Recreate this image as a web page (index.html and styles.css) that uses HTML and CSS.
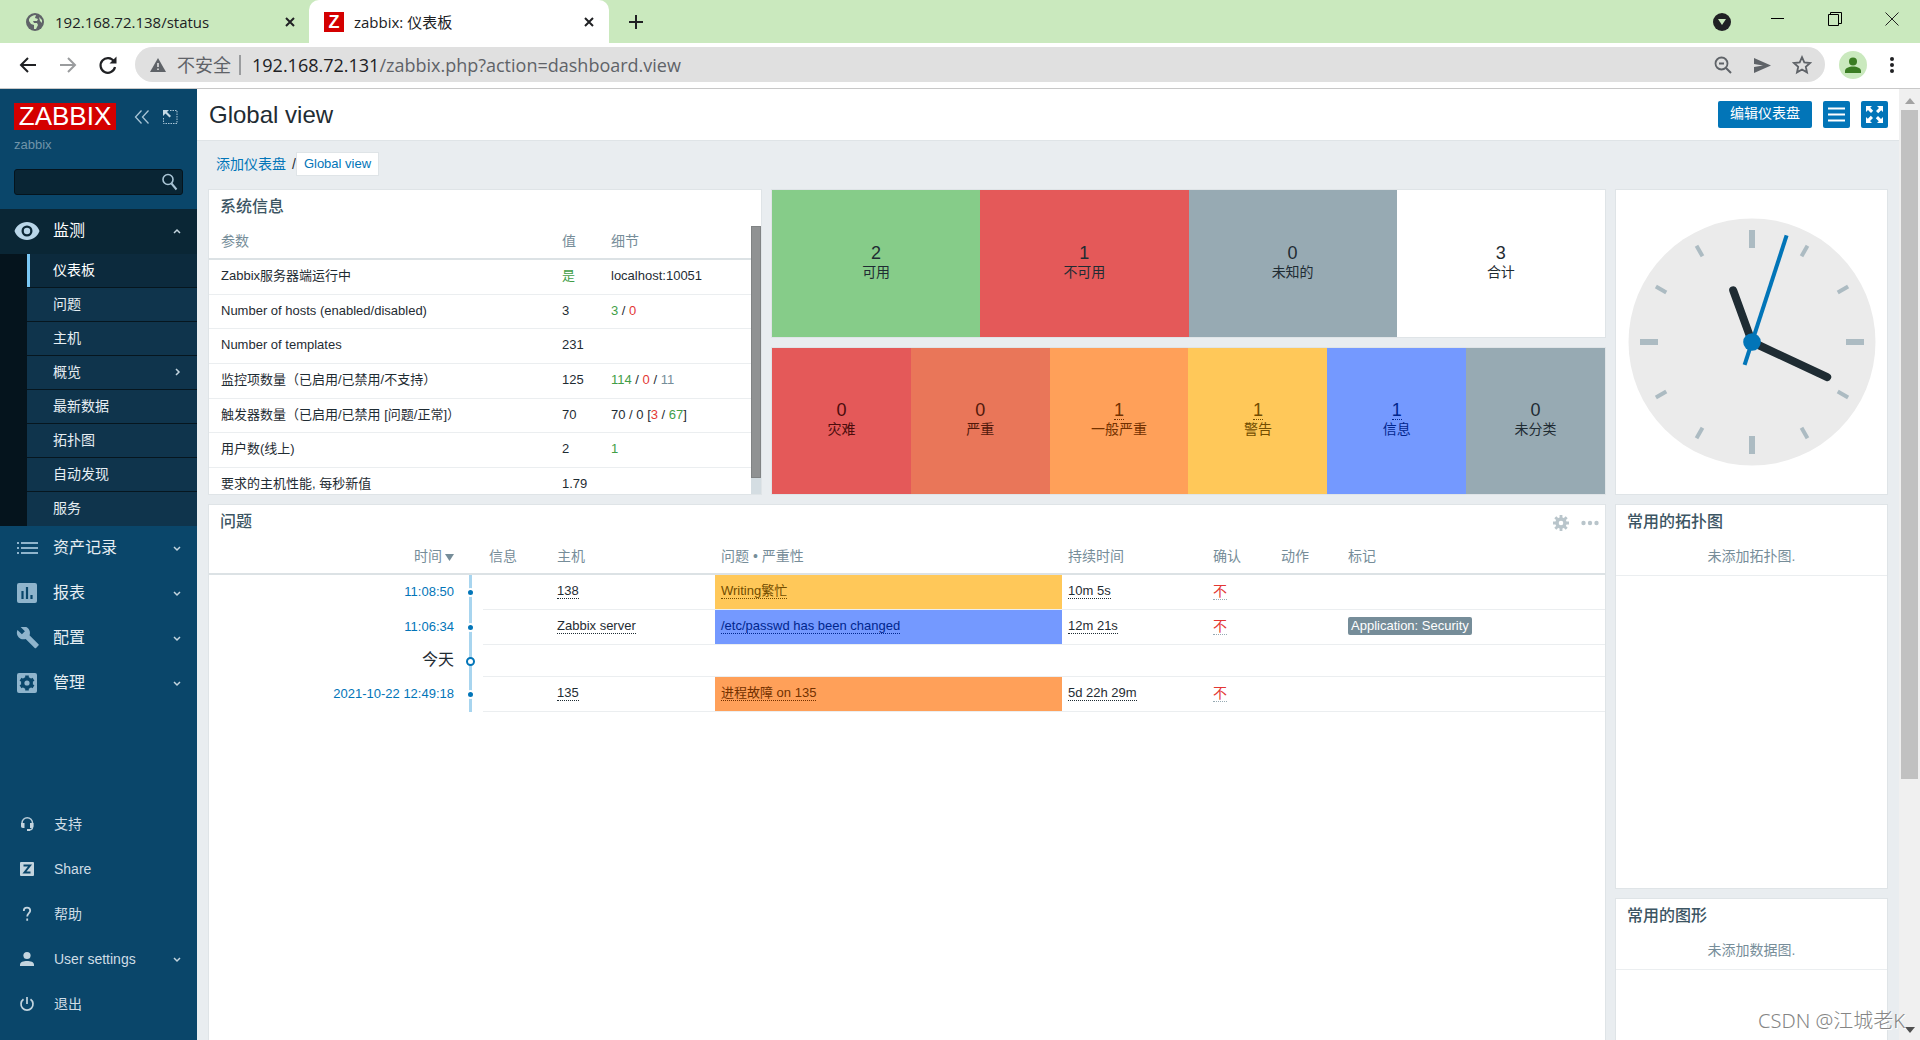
FILE: index.html
```html
<!DOCTYPE html>
<html lang="zh-CN">
<head>
<meta charset="utf-8">
<title>zabbix: 仪表板</title>
<link rel="stylesheet" href="styles.css">
</head>
<body>
<div class="tabstrip">
  <div class="tab">
    <svg width="20" height="20" viewBox="0 0 20 20"><circle cx="10" cy="10" r="9" fill="#5f6368"/><path d="M4 7c2-3 4-4 7-4l-1 3 3 1-1 2-4 0 1 2 3 0 1 2-2 4-2 0 0-4-3-1-2-3zM14 5l3 3 0 3-2-2z" fill="#cae9be"/></svg>
    <span class="tab-title">192.168.72.138/status</span>
    <button class="icon-btn" aria-label="关闭标签页"><svg width="10" height="10" viewBox="0 0 10 10"><path d="M1 1l8 8M9 1l-8 8" stroke="#202124" stroke-width="2"/></svg></button>
  </div>
  <div class="tab tab-active">
    <span class="favicon">Z</span>
    <span class="tab-title">zabbix: 仪表板</span>
    <button class="icon-btn" aria-label="关闭标签页"><svg width="10" height="10" viewBox="0 0 10 10"><path d="M1 1l8 8M9 1l-8 8" stroke="#202124" stroke-width="2"/></svg></button>
  </div>
  <button class="icon-btn new-tab" aria-label="新标签页"><svg width="16" height="16" viewBox="0 0 16 16"><path d="M8 1v14M1 8h14" stroke="#202124" stroke-width="2"/></svg></button>
  <div class="window-controls">
    <button class="icon-btn" aria-label="搜索标签页"><svg width="18" height="18" viewBox="0 0 18 18"><circle cx="9" cy="9" r="9" fill="#202124"/><path d="M5 6h8l-4 6z" fill="#cae9be"/></svg></button>
    <div class="window-buttons">
      <button class="icon-btn" aria-label="最小化"><svg width="14" height="14" viewBox="0 0 14 14"><path d="M0 6.500h13" stroke="#000"/></svg></button>
      <button class="icon-btn" aria-label="还原"><svg width="14" height="14" viewBox="0 0 14 14"><path d="M.5 2.500h10v11h-10zM2.500 2V.5h11v11H11" fill="none" stroke="#000"/></svg></button>
      <button class="icon-btn" aria-label="关闭"><svg width="14" height="14" viewBox="0 0 14 14"><path d="M.5.5l13 13M13.500.5l-13 13" stroke="#222"/></svg></button>
    </div>
  </div>
</div>
<div class="toolbar">
  <div class="nav-buttons">
    <button class="icon-btn" aria-label="后退"><svg width="20" height="20" viewBox="0 0 20 20"><path d="M18 10H3M10 3l-7 7 7 7" fill="none" stroke="#202124" stroke-width="2"/></svg></button>
    <button class="icon-btn" aria-label="前进"><svg width="20" height="20" viewBox="0 0 20 20"><path d="M2 10h15M10 3l7 7-7 7" fill="none" stroke="#9a9c9e" stroke-width="2"/></svg></button>
    <button class="icon-btn" aria-label="刷新"><svg width="20" height="20" viewBox="0 0 20 20"><path d="M16 6.500A7.300 7.300 0 1 0 17 12" fill="none" stroke="#202124" stroke-width="2.200"/><path d="M18.500 1.500v7h-7z" fill="#202124"/></svg></button>
  </div>
  <div class="omnibox">
    <svg width="16" height="14" viewBox="0 0 16 14"><path d="M8 0l8 14H0z" fill="#5f6368"/><path d="M8 5v4M8 10.500v1.500" stroke="#e0e0e0" stroke-width="1.600"/></svg>
    <span class="insecure">不安全</span>
    <span class="address"><b>192.168.72.131</b>/zabbix.php?action=dashboard.view</span>
    <div class="omni-actions">
      <button class="icon-btn" aria-label="缩放"><svg width="18" height="18" viewBox="0 0 18 18"><circle cx="7.500" cy="7.500" r="6" fill="none" stroke="#5f6368" stroke-width="1.800"/><path d="M5 7.500h5M12 12l5 5" stroke="#5f6368" stroke-width="2"/></svg></button>
      <button class="icon-btn" aria-label="发送"><svg width="18" height="18" viewBox="0 0 18 18"><path d="M1 2l17 7.500L1 17v-6l9-1.500L1 8z" fill="#5f6368"/></svg></button>
      <button class="icon-btn" aria-label="收藏"><svg width="20" height="20" viewBox="0 0 20 20"><path d="M10 2.200l2.300 5.200 5.700.6-4.200 3.800 1.200 5.600-5-2.900-5 2.900 1.200-5.600L2 8l5.700-.6z" fill="none" stroke="#5f6368" stroke-width="1.800"/></svg></button>
    </div>
  </div>
  <div class="profile-buttons">
    <button class="icon-btn" aria-label="用户"><svg width="28" height="28" viewBox="0 0 28 28"><circle cx="14" cy="14" r="14" fill="#cae9be"/><circle cx="14" cy="10.500" r="4" fill="#3b7d23"/><path d="M6 22v-2c0-3 4-4.500 8-4.500s8 1.500 8 4.500v2z" fill="#3b7d23"/></svg></button>
    <button class="icon-btn" aria-label="菜单"><svg width="6" height="18" viewBox="0 0 6 18"><g fill="#202124"><circle cx="3" cy="3" r="2"/><circle cx="3" cy="9" r="2"/><circle cx="3" cy="15" r="2"/></g></svg></button>
  </div>
</div>

<div class="app">
  <aside class="sidebar">
    <div class="brand">
      <a class="logo" href="#">ZABBIX</a>
      <button class="icon-btn" aria-label="折叠"><svg width="16" height="14" viewBox="0 0 16 14"><path d="M7.500.5L1.500 7l6 6.500M14.500.5L8.500 7l6 6.500" fill="none" stroke="#a9c5d6" stroke-width="1.300"/></svg></button>
      <button class="icon-btn" aria-label="隐藏"><svg width="16" height="16" viewBox="0 0 16 16"><path d="M8 1.500h7v13H1.500V8" fill="none" stroke="#a9c5d6" stroke-dasharray="1.500 1"/><path d="M1 1h6L5 3l4 4-1.500 1.500-4-4L1 7z" fill="#c5dae6"/></svg></button>
    </div>
    <div class="server-name">zabbix</div>
    <form class="search"><input type="search" aria-label="搜索"><button class="icon-btn" type="button" aria-label="搜索"><svg width="16" height="18" viewBox="0 0 16 18"><circle cx="6" cy="6.500" r="5" fill="none" stroke="#a9c5d6" stroke-width="1.600"/><path d="M9.500 10.500l5 6" stroke="#a9c5d6" stroke-width="2"/></svg></button></form>
    <nav>
      <ul class="menu">
        <li><a class="open" href="#"><svg width="26" height="18" viewBox="0 0 26 18"><path d="M13 0C7 0 2.500 3.500.5 9c2 5.500 6.500 9 12.500 9s10.500-3.500 12.500-9C23.500 3.500 19 0 13 0zm0 14.500a5.500 5.500 0 1 1 0-11 5.500 5.500 0 0 1 0 11z" fill="#b9d6e9"/><circle cx="13" cy="9" r="3.200" fill="#b9d6e9"/></svg><span>监测</span><svg class="chev" width="8" height="8" viewBox="0 0 8 8"><path d="M1 6l3-3 3 3"/></svg></a>
          <ul class="submenu">
            <li><a class="current" href="#">仪表板</a></li>
            <li><a href="#">问题</a></li>
            <li><a href="#">主机</a></li>
            <li><a href="#"><span>概览</span><svg class="chev" width="8" height="8" viewBox="0 0 8 8"><path d="M3 1l3 3-3 3"/></svg></a></li>
            <li><a href="#">最新数据</a></li>
            <li><a href="#">拓扑图</a></li>
            <li><a href="#">自动发现</a></li>
            <li><a href="#">服务</a></li>
          </ul>
        </li>
        <li><a href="#"><svg width="26" height="20" viewBox="0 0 26 20"><path d="M3 5h2M7 5h17M3 10h2M7 10h17M3 15h2M7 15h17" stroke="#8fb4cc" stroke-width="2"/></svg><span>资产记录</span><svg class="chev" width="8" height="8" viewBox="0 0 8 8"><path d="M1 3l3 3 3-3"/></svg></a></li>
        <li><a href="#"><svg width="26" height="22" viewBox="0 0 26 22"><rect x="3" y="1" width="20" height="20" rx="2" fill="#8fb4cc"/><path d="M8.500 17V9M13 17V5M17.500 17v-4" stroke="#0a466a" stroke-width="2.200"/></svg><span>报表</span><svg class="chev" width="8" height="8" viewBox="0 0 8 8"><path d="M1 3l3 3 3-3"/></svg></a></li>
        <li><a href="#"><svg width="26" height="22" viewBox="0 0 26 22"><path d="M23 18.200l-9-9c.9-2.300.4-5-1.500-6.900-2-2-5-2.400-7.400-1.300l4.300 4.300-3 3L2 4C.8 6.400 1.300 9.400 3.300 11.400c1.900 1.900 4.600 2.400 6.900 1.500l9 9c.4.4 1 .4 1.400 0l2.300-2.300c.5-.4.500-1.100.1-1.400z" transform="translate(1.500 -1)" fill="#8fb4cc"/></svg><span>配置</span><svg class="chev" width="8" height="8" viewBox="0 0 8 8"><path d="M1 3l3 3 3-3"/></svg></a></li>
        <li><a href="#"><svg width="26" height="22" viewBox="0 0 26 22"><rect x="3" y="1" width="20" height="20" rx="2" fill="#8fb4cc"/><circle cx="13" cy="11" r="4.200" fill="none" stroke="#0a466a" stroke-width="3.600"/><path d="M13 3.500v15M6.500 7.200l13 7.600M6.500 14.800l13-7.600" stroke="#0a466a" stroke-width="3.600"/><circle cx="13" cy="11" r="2.600" fill="#8fb4cc"/></svg><span>管理</span><svg class="chev" width="8" height="8" viewBox="0 0 8 8"><path d="M1 3l3 3 3-3"/></svg></a></li>
      </ul>
    </nav>
    <ul class="menu user-menu">
      <li><a href="#"><svg width="26" height="16" viewBox="0 0 26 16"><path d="M8 9V7a5 5 0 0 1 10.500 0v4c0 2-1 3-3.500 3" fill="none" stroke="#b6cbd8" stroke-width="1.500"/><path d="M7 7h3.500v5H9c-1.500 0-2-1-2-2zM19.500 7H16v5h1.500c1.500 0 2-1 2-2zM13 13h3v2h-3z" fill="#c4d5df"/></svg><span>支持</span></a></li>
      <li><a href="#"><svg width="26" height="14" viewBox="0 0 26 14"><rect x="6" width="14" height="14" rx="1" fill="#c4d5df"/><path d="M9.500 3.500h6.500L10.500 10.500h6" fill="none" stroke="#0a466a" stroke-width="2"/></svg><span>Share</span></a></li>
      <li><a href="#"><svg width="26" height="16" viewBox="0 0 26 16"><path d="M9.800 5c0-2 1.200-3.300 3.200-3.300S16.200 3 16.200 4.800c0 2.200-3 2.700-3 5.700M13.200 12.500v2.300" fill="none" stroke="#c4d5df" stroke-width="1.800"/></svg><span>帮助</span></a></li>
      <li><a href="#"><svg width="26" height="16" viewBox="0 0 26 16"><circle cx="13" cy="4.500" r="3.600" fill="#c4d5df"/><path d="M6 15v-1.500C6 11 9.500 10 13 10s7 1 7 3.500V15z" fill="#c4d5df"/></svg><span>User settings</span><svg class="chev" width="8" height="8" viewBox="0 0 8 8"><path d="M1 3l3 3 3-3"/></svg></a></li>
      <li><a href="#"><svg width="26" height="16" viewBox="0 0 26 16"><path d="M9.500 3.200a6 6 0 1 0 7 0M13 1v7" fill="none" stroke="#c4d5df" stroke-width="1.700"/></svg><span>退出</span></a></li>
    </ul>
  </aside>

  <main>
    <header class="page-header">
      <h1>Global view</h1>
      <button class="btn btn-text">编辑仪表盘</button>
      <button class="btn btn-square" aria-label="操作"><svg width="17" height="15" viewBox="0 0 17 15"><path d="M0 1.500h17M0 7.500h17M0 13.500h17" stroke="#fff" stroke-width="2"/></svg></button>
      <button class="btn btn-square" aria-label="全屏"><svg width="17" height="17" viewBox="0 0 17 17"><path d="M0 0h6L4.200 1.800l3 3-2.200 2.200-3-3L0 6zM17 0v6l-1.800-1.800-3 3L10 5l3-3L11 0zM0 17v-6l1.800 1.800 3-3L7 12l-3 3 2 2zM17 17h-6l1.800-1.800-3-3L12 10l3 3 2-2z" fill="#fff"/></svg></button>
    </header>
    <nav class="crumbs"><a href="#">添加仪表盘</a><span>/</span><a class="here" href="#">Global view</a></nav>

    <div class="dashboard">
      <section class="widget sysinfo">
        <h2>系统信息</h2>
        <div class="scroll-area">
          <table>
            <colgroup><col><col class="c-value"><col class="c-detail"></colgroup>
            <thead><tr><th>参数</th><th>值</th><th>细节</th></tr></thead>
            <tbody>
              <tr><td>Zabbix服务器端运行中</td><td class="green">是</td><td>localhost:10051</td></tr>
              <tr><td>Number of hosts (enabled/disabled)</td><td>3</td><td><span class="green">3</span> / <span class="red">0</span></td></tr>
              <tr><td>Number of templates</td><td>231</td><td></td></tr>
              <tr><td>监控项数量（已启用/已禁用/不支持）</td><td>125</td><td><span class="green">114</span> / <span class="red">0</span> / <span class="grey">11</span></td></tr>
              <tr><td>触发器数量（已启用/已禁用 [问题/正常]）</td><td>70</td><td>70 / 0 [<span class="red">3</span> / <span class="green">67</span>]</td></tr>
              <tr><td>用户数(线上)</td><td>2</td><td class="green">1</td></tr>
              <tr><td>要求的主机性能, 每秒新值</td><td>1.79</td><td></td></tr>
            </tbody>
          </table>
          <div class="mini-scroll"><div></div></div>
        </div>
      </section>

      <section class="widget tiles hosts">
        <div class="ok"><b>2</b><span>可用</span></div>
        <div class="bad"><b>1</b><span>不可用</span></div>
        <div class="unknown"><b>0</b><span>未知的</span></div>
        <div><b>3</b><span>合计</span></div>
      </section>

      <section class="widget tiles severity">
        <div class="disaster"><b>0</b><span>灾难</span></div>
        <div class="high"><b>0</b><span>严重</span></div>
        <div class="average"><b><a href="#">1</a></b><span>一般严重</span></div>
        <div class="warning"><b><a href="#">1</a></b><span>警告</span></div>
        <div class="info"><b><a href="#">1</a></b><span>信息</span></div>
        <div class="unknown"><b>0</b><span>未分类</span></div>
      </section>

      <section class="widget clock">
        <svg width="248" height="248" viewBox="-124 -124 248 248">
          <circle r="123.500" fill="#ebebeb"/>
          <g stroke="#acbbc2" stroke-width="6"><path d="M0-112v18M0 112V94M-112 0h18M112 0H94"/></g>
          <g stroke="#acbbc2" stroke-width="4">
            <path d="M0-111v12" transform="rotate(30)"/><path d="M0-111v12" transform="rotate(60)"/><path d="M0-111v12" transform="rotate(120)"/><path d="M0-111v12" transform="rotate(150)"/>
            <path d="M0-111v12" transform="rotate(210)"/><path d="M0-111v12" transform="rotate(240)"/><path d="M0-111v12" transform="rotate(300)"/><path d="M0-111v12" transform="rotate(330)"/>
          </g>
          <g stroke="#1f2c33" stroke-width="8" stroke-linecap="round"><path d="M0 0v-55" transform="rotate(-20)"/><path d="M0 0v-83" transform="rotate(115)"/></g>
          <path d="M0 24v-136" transform="rotate(18)" stroke="#0275b8" stroke-width="4"/>
          <circle r="8.800" fill="#0275b8"/>
        </svg>
      </section>

      <section class="widget problems">
        <div class="widget-head">
          <h2>问题</h2>
          <button class="icon-btn" aria-label="配置"><svg width="16" height="16" viewBox="0 0 16 16"><circle cx="8" cy="8" r="4" fill="none" stroke="#b9c5cb" stroke-width="3.400"/><path d="M8 0v4M8 12v4M0 8h4M12 8h4M2.300 2.300l3 3M10.700 10.700l3 3M2.300 13.700l3-3M10.700 5.300l3-3" stroke="#b9c5cb" stroke-width="2.800"/></svg></button>
          <button class="icon-btn" aria-label="更多"><svg width="18" height="6" viewBox="0 0 18 6"><g fill="#b9c5cb"><circle cx="2.500" cy="3" r="2.200"/><circle cx="9" cy="3" r="2.200"/><circle cx="15.500" cy="3" r="2.200"/></g></svg></button>
        </div>
        <table>
          <colgroup><col class="c-time"><col class="c-line"><col class="c-info"><col class="c-host"><col class="c-problem"><col class="c-duration"><col class="c-ack"><col class="c-action"><col></colgroup>
          <thead><tr><th class="time">时间<svg width="9" height="7" viewBox="0 0 9 7"><path d="M0 0h9L4.500 7z" fill="#768d99"/></svg></th><th></th><th>信息</th><th>主机</th><th>问题 • 严重性</th><th>持续时间</th><th>确认</th><th>动作</th><th>标记</th></tr></thead>
          <tbody>
            <tr><td class="time"><a href="#">11:08:50</a></td><td class="axis"><i></i></td><td></td><td><a href="#">138</a></td><td class="warning"><a href="#">Writing繁忙</a></td><td><a href="#">10m 5s</a></td><td class="ack"><a href="#">不</a></td><td></td><td></td></tr>
            <tr><td class="time"><a href="#">11:06:34</a></td><td class="axis"><i></i></td><td></td><td><a href="#">Zabbix server</a></td><td class="info"><a href="#">/etc/passwd has been changed</a></td><td><a href="#">12m 21s</a></td><td class="ack"><a href="#">不</a></td><td></td><td><span class="tag">Application: Security</span></td></tr>
            <tr class="day"><td class="time">今天</td><td class="axis"><i></i></td><td colspan="7"></td></tr>
            <tr><td class="time"><a href="#">2021-10-22 12:49:18</a></td><td class="axis"><i></i></td><td></td><td><a href="#">135</a></td><td class="average"><a href="#">进程故障 on 135</a></td><td><a href="#">5d 22h 29m</a></td><td class="ack"><a href="#">不</a></td><td></td><td></td></tr>
          </tbody>
        </table>
      </section>

      <section class="widget maps"><h2>常用的拓扑图</h2><p>未添加拓扑图.</p></section>
      <section class="widget graphs"><h2>常用的图形</h2><p>未添加数据图.</p></section>
    </div>
  </main>

  <div class="page-scroll">
    <svg width="10" height="6" viewBox="0 0 10 6"><path d="M0 6l5-6 5 6z" fill="#a3a3a3"/></svg>
    <div class="thumb"></div>
    <svg width="10" height="6" viewBox="0 0 10 6"><path d="M0 0h10L5 6z" fill="#505050"/></svg>
  </div>
</div>
<div class="watermark">CSDN @江城老K</div>
</body>
</html>
```
FILE: styles.css
```css
* { box-sizing: border-box; }
body {
  margin: 0;
  height: 100vh;
  display: flex;
  flex-direction: column;
  overflow: hidden;
  font: 13px/18px "Liberation Sans", "Noto Sans CJK SC", sans-serif;
  color: #1f2c33;
}
a { color: #0275b8; text-decoration: none; }
ul { list-style: none; margin: 0; padding: 0; }
svg { display: block; flex: none; }
button { font: inherit; cursor: pointer; }
.icon-btn { display: flex; padding: 0; border: 0; background: none; }

/* Browser frame */
.tabstrip {
  flex: none;
  height: 43px;
  display: flex;
  align-items: center;
  background: #cae9be;
  font: 15px/24px "Open Sans", "Noto Sans CJK SC", sans-serif;
  color: #202124;
}
.tab { display: flex; align-items: center; gap: 10px; width: 309px; height: 43px; padding: 0 14px 0 25px; }
.tab-active { width: 300px; padding: 0 15px; border-radius: 10px 10px 0 0; background: #fff; }
.tab-title { flex: 1; white-space: nowrap; }
.favicon { width: 20px; height: 20px; background: #d40000; color: #fff; font: bold 18px/20px "Liberation Sans", sans-serif; text-align: center; }
.new-tab { margin-left: 19px; }
.window-controls { display: flex; align-items: center; gap: 40px; margin-left: auto; padding-right: 21px; }
.window-buttons { display: flex; align-items: center; gap: 43px; padding-bottom: 6px; }
.toolbar {
  flex: none;
  height: 46px;
  display: flex;
  align-items: center;
  padding: 0 25px 2px 18px;
  background: #fff;
  border-bottom: 1px solid #c8c8c8;
  font: 18px/24px "Open Sans", "Noto Sans CJK SC", sans-serif;
}
.nav-buttons { display: flex; gap: 20px; }
.profile-buttons { display: flex; align-items: center; gap: 22px; }
.omnibox { flex: 1; height: 35px; display: flex; align-items: center; margin: 0 14px 0 17px; padding: 0 13px 0 15px; border-radius: 18px; background: #e0e0e0; color: #5f6368; white-space: nowrap; }
.insecure { margin-left: 11px; padding-right: 8px; border-right: 2px solid #9a9c9e; line-height: 20px; }
.address { margin-left: 11px; }
.address b { font-weight: 400; color: #202124; }
.omni-actions { display: flex; align-items: center; gap: 21px; margin-left: auto; }

/* Application shell */
.app { flex: 1; min-height: 0; display: flex; background: #e9edf0; }
.sidebar { flex: none; width: 197px; display: flex; flex-direction: column; padding-bottom: 13px; background: #0a466a; }
.brand { display: flex; align-items: center; gap: 12px; padding: 14px 14px 0; }
.logo { width: 102px; margin-right: 6px; background: #d40000; color: #fff; font-size: 26px; line-height: 27px; text-align: center; }
.server-name { padding: 6px 14px 0; color: #7094a9; }
.search { display: flex; align-items: center; height: 26px; margin: 15px 14px 14px; padding-right: 4px; border: 1px solid #05141d; border-radius: 3px; background: #092534; }
.search input { flex: 1; min-width: 0; height: 24px; border: 0; background: none; color: #fff; outline: 0; }
.menu a { display: flex; align-items: center; height: 45px; padding: 0 16px 2px 14px; color: #e6eef3; font-size: 16px; }
.menu a > span { margin-left: 13px; }
.menu .chev { margin-left: auto; fill: none; stroke: #c4d5df; stroke-width: 1.5; }
.menu a.open { background: #0a2635; color: #fff; }
.submenu { padding-left: 27px; background: #05141d; }
.submenu li { border-bottom: 1px solid #06161f; }
.submenu li:last-child { border-bottom: 0; }
.submenu a { height: 33px; padding-left: 26px; background: #0f344c; font-size: 14px; }
.submenu li:last-child a { height: 34px; }
.submenu a > span { margin-left: 0; }
.submenu a.current { padding-left: 23px; border-left: 3px solid #7ac8f5; background: #0c2a3d; color: #fff; }
.user-menu { margin-top: auto; }
.user-menu a { font-size: 14px; color: #cfdde6; }
.user-menu a > span { margin-left: 14px; }

main { flex: 1; min-width: 0; overflow: hidden; display: flex; flex-direction: column; }
.page-header { flex: none; height: 52px; display: flex; align-items: center; gap: 11px; padding: 0 11px 0 12px; background: #fff; border-bottom: 1px solid #dfe4e7; }
h1 { flex: 1; margin: 0; font-size: 24px; line-height: 32px; font-weight: 400; }
.btn { height: 27px; border: 0; border-radius: 2px; background: #0275b8; color: #fff; font-size: 14px; line-height: 24px; }
.btn-text { width: 94px; padding: 0 0 3px; }
.btn-square { display: flex; align-items: center; justify-content: center; width: 27px; padding: 0; }
.crumbs { flex: none; display: flex; align-items: center; height: 48px; padding: 0 19px 2px; font-size: 14px; }
.crumbs span { margin-left: 6px; }
.crumbs .here { padding: 2px 7px; border: 1px solid #dfe4e7; background: #fff; font-size: 13px; }

/* Dashboard */
.dashboard {
  flex: 1;
  display: grid;
  grid-template-columns: minmax(0, 554fr) minmax(0, 835fr) minmax(0, 273fr);
  grid-template-rows: 149px 148px 385px minmax(200px, auto);
  gap: 9px;
  padding: 0 11px;
}
.widget { min-width: 0; overflow: hidden; border: 1px solid #dfe4e7; background: #fff; }
.sysinfo { grid-row: 1 / 3; display: flex; flex-direction: column; }
.hosts, .severity { grid-column: 2; }
.clock { grid-column: 3; grid-row: 1 / 3; display: flex; align-items: center; justify-content: center; }
.problems { grid-column: 1 / 3; grid-row: 3 / 5; }
.maps, .graphs { grid-column: 3; }
h2 { margin: 0; padding: 0 11px 2px; font-size: 16px; line-height: 34px; font-weight: 500; color: #3c5563; }
.widget p { margin: 0; height: 35px; border-bottom: 1px solid #ebeef0; font-size: 14px; line-height: 30px; text-align: center; color: #768d99; }
.widget-head { display: flex; align-items: center; gap: 12px; padding-right: 6px; }
.widget-head h2 { flex: 1; }

table { width: 100%; table-layout: fixed; border-collapse: separate; border-spacing: 0; }
th, td { padding: 0 6px 2px; text-align: left; white-space: nowrap; font-weight: 400; }
th { height: 34px; border-bottom: 2px solid #dce2e5; color: #768d99; font-size: 14px; }
td { height: 35px; border-bottom: 1px solid #ebeef0; }
.green { color: #429e47; }
.red { color: #e33734; }
.grey { color: #768d99; }

.scroll-area { flex: 1; min-height: 0; display: flex; align-items: flex-start; overflow: hidden; }
.sysinfo th:first-child, .sysinfo td:first-child { padding-left: 12px; }
.sysinfo tr:nth-child(3n+2) td { height: 34px; }
.c-value { width: 49px; }
.c-detail { width: 146px; }
.mini-scroll { flex: none; width: 10px; align-self: stretch; background: #d4dde2; }
.mini-scroll div { height: 94%; border: 1px solid #808384; background: #909293; }

.tiles { display: flex; }
.tiles > div { flex: 1; display: flex; flex-direction: column; align-items: center; justify-content: center; padding-bottom: 4px; font-size: 14px; }
.tiles b { font-size: 18px; line-height: 20px; font-weight: 400; }
.tiles a { display: block; height: 20px; border-bottom: 1px dotted; color: inherit; }
.ok { background: #86cc89; }
.bad { background: #e45959; }
.unknown { background: #97aab3; }
.disaster { background: #e45959; color: #4b0c0c; }
.high { background: #e97659; color: #52190b; }
.average { background: #ffa059; color: #733100; }
.warning { background: #ffc859; color: #734d00; }
.info { background: #7499ff; color: #00268e; }

.c-time { width: 248px; }
.c-line { width: 26px; }
.c-info { width: 68px; }
.c-host { width: 164px; }
.c-problem { width: 347px; }
.c-duration { width: 145px; }
.c-ack { width: 68px; }
.c-action { width: 67px; }
.problems th.time, .problems td.time { padding-right: 3px; text-align: right; }
.time svg { display: inline-block; margin-left: 3px; }
.problems td.time, .problems td.axis { border-bottom: 0; }
.problems td a { border-bottom: 1px dotted; color: inherit; }
.problems td.time a { border: 0; color: #0275b8; }
.problems td.ack a { border-bottom: 1px dotted #97aab3; color: #e33734; font-size: 14px; }
.problems .axis { padding: 0; text-align: center; background: linear-gradient(#a8d5ef, #a8d5ef) center / 3px 100% no-repeat; }
.axis i { display: block; width: 9px; height: 9px; margin: 0 auto; border: 2px solid #fff; border-radius: 50%; background: #0275b8; }
.day td { height: 32px; font-size: 16px; }
.day .axis i { border-color: #0275b8; background: #fff; }
.tag { display: inline-block; padding: 0 3px; border-radius: 2px; background: #768d99; color: #fff; }

/* Page scrollbar */
.page-scroll { flex: none; width: 21px; display: flex; flex-direction: column; align-items: center; padding: 9px 0 7px; background: #f0f0f0; }
.page-scroll .thumb { width: 17px; height: 71.5%; margin: 6px 0 auto; background: #c1c1c1; }
.watermark { position: absolute; right: 15px; bottom: 5px; font: 300 20px/28px "Noto Sans", "Noto Sans CJK SC", sans-serif; color: #858585; text-shadow: 1px 1px 0 #fff; }
```
